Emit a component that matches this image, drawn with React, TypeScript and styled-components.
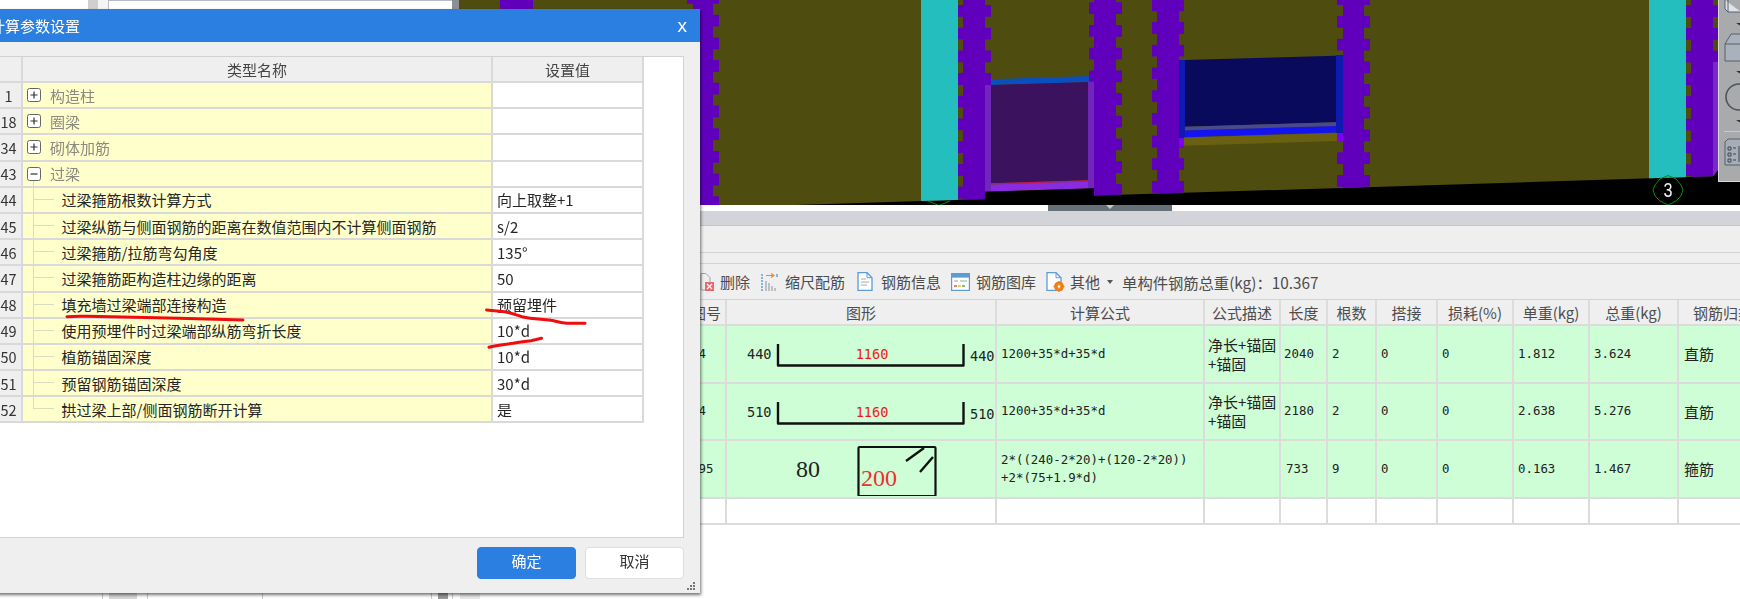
import React from "react";
import styled, { createGlobalStyle } from "styled-components";

const CJK = `"Noto Sans CJK SC", "Noto Sans", sans-serif`;
const MONO = `"DejaVu Sans Mono", "Noto Sans CJK SC", monospace`;

const Global = createGlobalStyle`
  html, body { margin: 0; padding: 0; background: #fff; overflow: hidden; }
  * { box-sizing: border-box; }
`;

const Page = styled.div`
  position: relative;
  width: 1740px;
  height: 599px;
  overflow: hidden;
  display: flex;
  flex-direction: column;
  font-family: ${CJK};
  filter: blur(0.55px);
`;

/* ---------- upper workspace ---------- */
const TopRow = styled.div`
  display: flex;
  height: 205px;
  flex: none;
`;
const TreePane = styled.div`
  width: 459px;
  flex: none;
  display: flex;
  background: #fff;
`;
const PaneBlank = styled.div`
  width: 88px;
  background: #fff;
`;
const PaneGutter = styled.div<{ $w: number; $bg: string }>`
  width: ${(p) => p.$w}px;
  background: ${(p) => p.$bg};
`;
const PaneBox = styled.div`
  flex: 1;
  background: #fff;
  border-top: 1px solid #b8bcc4;
  border-left: 1px solid #b8bcc4;
`;
const CanvasWrap = styled.div`
  position: relative;
  flex: 1;
  background: #000;
`;
const CanvasSvg = styled.svg`
  display: block;
`;
const SideTools = styled.div`
  position: absolute;
  top: 0;
  right: 0;
  width: 22px;
  height: 182px;
  background: #a9aaab;
  border-left: 1px solid #d8d8d8;
  border-bottom: 1px solid #d8d8d8;
  overflow: hidden;
`;
const Splitter = styled.div`
  height: 6px;
  flex: none;
  background: #fff;
  padding-left: 1048px;
`;
const SplitHandle = styled.div`
  width: 124px;
  height: 6px;
  background: #667078;
  display: flex;
  justify-content: center;
  &::after {
    content: "";
    border-left: 4px solid transparent;
    border-right: 4px solid transparent;
    border-top: 4px solid #c4c8cc;
  }
`;

/* ---------- lower workspace ---------- */
const LowerRow = styled.div`
  flex: 1;
  display: flex;
  min-height: 0;
`;
const LowerLeft = styled.div`
  width: 687px;
  flex: none;
  display: flex;
  align-items: flex-end;
  background: #fff;
`;
const Tick = styled.div<{ $w: number; $bg: string; $line?: boolean }>`
  width: ${(p) => p.$w}px;
  height: 8px;
  background: ${(p) => p.$bg};
  border-right: ${(p) => (p.$line ? "1px solid #c8c8c8" : "none")};
`;
const LowerRight = styled.div`
  flex: 1;
  min-width: 0;
  display: flex;
  flex-direction: column;
  background: #fff;
`;
const TabBand = styled.div`
  height: 15px;
  flex: none;
  background: #d3d4d9;
  border-bottom: 1px solid #c4c5c9;
`;
const Strip = styled.div<{ $h: number }>`
  height: ${(p) => p.$h}px;
  flex: none;
  background: #efefef;
  border-bottom: 1px solid #d2d3d6;
`;
const Toolbar = styled.div`
  height: 35px;
  flex: none;
  background: #efefef;
  display: flex;
  align-items: center;
  padding-left: 13px;
  color: #4c4c4c;
  font-size: 15px;
  white-space: nowrap;
`;
const ToolItem = styled.div<{ $gap: number; $after: number }>`
  display: flex;
  align-items: center;
  gap: ${(p) => p.$gap}px;
  margin-right: ${(p) => p.$after}px;
`;
const Caret = styled.span`
  width: 0;
  height: 0;
  border-left: 3.5px solid transparent;
  border-right: 3.5px solid transparent;
  border-top: 4px solid #555;
  margin-left: 7px;
  margin-right: 9px;
`;
const Weight = styled.span`
  font-size: 15.3px;
`;

const Grid = styled.div`
  width: 1082px;
  overflow: hidden;
  border-top: 1px solid #d4d4d4;
`;
const GRID_COLS = "40px 270px 208px 76px 47px 49px 61px 76px 76px 89px 90px";
const GridRow = styled.div<{ $h: number; $bg: string }>`
  display: grid;
  grid-template-columns: ${GRID_COLS};
  height: ${(p) => p.$h}px;
  background: ${(p) => p.$bg};
  border-bottom: 2px solid #dcdcdc;
`;
const HeadCell = styled.div`
  display: flex;
  align-items: center;
  justify-content: center;
  border-right: 2px solid #dcdcdc;
  color: #4d4d4d;
  font-size: 15px;
  white-space: nowrap;
  overflow: hidden;
`;
const DataCell = styled.div<{ $cjk?: boolean; $pad?: number }>`
  display: flex;
  align-items: center;
  padding-left: ${(p) => p.$pad ?? 4}px;
  border-right: 2px solid #dcdcdc;
  color: #222;
  font-family: ${(p) => (p.$cjk ? CJK : MONO)};
  font-size: ${(p) => (p.$cjk ? 15 : 12.4)}px;
  line-height: ${(p) => (p.$cjk ? 19 : 18)}px;
  white-space: nowrap;
  overflow: hidden;
`;
const ShapeCell = styled.div`
  border-right: 2px solid #dcdcdc;
  overflow: hidden;
`;

/* ---------- dialog ---------- */
const Dialog = styled.div`
  position: absolute;
  left: -20px;
  top: 9px;
  width: 720px;
  height: 584px;
  background: #efefef;
  box-shadow: 1px 2px 3px rgba(0, 0, 0, 0.55);
  display: flex;
  flex-direction: column;
`;
const TitleBar = styled.div`
  height: 33px;
  flex: none;
  background: #2b7fe0;
  color: #fff;
  font-size: 15px;
  display: flex;
  align-items: center;
  justify-content: space-between;
  padding: 0 13px 0 10px;
`;
const CloseX = styled.span`
  font-family: "Liberation Sans", sans-serif;
  font-size: 19px;
  line-height: 1;
`;
const TableBox = styled.div`
  height: 482px;
  margin: 14px 16px 0 2px;
  flex: none;
  background: #fff;
  border: 1px solid #d2d2d2;
  border-left: none;
`;
const DLG_COLS = "41px 470px 151px";
const DlgRow = styled.div<{ $head?: boolean }>`
  display: grid;
  grid-template-columns: ${DLG_COLS};
  width: 662px;
  height: ${(p) => (p.$head ? 26 : 26.2)}px;
  border-bottom: 2px solid #d9d9d9;
`;
const NumCell = styled.div`
  background: #efefef;
  border-right: 2px solid #d9d9d9;
  padding-left: 14px;
  display: flex;
  align-items: center;
  justify-content: center;
  color: #333;
  font-size: 14.5px;
`;
const DlgHead = styled.div`
  background: #efefef;
  border-right: 2px solid #d9d9d9;
  display: flex;
  align-items: center;
  justify-content: center;
  color: #444;
  font-size: 15px;
`;
const NameCell = styled.div<{ $group?: boolean; $line?: "full" | "last" | "start" }>`
  position: relative;
  background: #ffffcc;
  border-right: 2px solid #d9d9d9;
  display: flex;
  align-items: center;
  gap: 9px;
  padding-left: ${(p) => (p.$group ? 4 : 38.6)}px;
  color: ${(p) => (p.$group ? "#8a8a80" : "#262626")};
  font-size: 15px;
  white-space: nowrap;
  &::before {
    content: ${(p) => (p.$line ? '""' : "none")};
    position: absolute;
    left: 10px;
    width: 1px;
    background: #dcdcc0;
    top: ${(p) => (p.$line === "start" ? "19px" : "-2px")};
    bottom: ${(p) => (p.$line === "last" ? "12px" : "-2px")};
  }
  &::after {
    content: ${(p) => (p.$group ? "none" : '""')};
    position: absolute;
    left: 10px;
    top: 11px;
    width: 21px;
    height: 1px;
    background: #dcdcc0;
  }
`;
const ValueCell = styled.div`
  background: #fff;
  border-right: 2px solid #d9d9d9;
  display: flex;
  align-items: center;
  padding-left: 4px;
  color: #262626;
  font-size: 15px;
`;
const Footer = styled.div`
  flex: 1;
  display: flex;
  justify-content: flex-end;
  gap: 9px;
  padding: 9px 16px 0 0;
`;
const Btn = styled.button<{ $primary?: boolean }>`
  width: 99px;
  height: 32px;
  border-radius: 4px;
  border: 1px solid ${(p) => (p.$primary ? "#2b7fe0" : "#dedede")};
  background: ${(p) => (p.$primary ? "#2b7fe0" : "#fff")};
  color: ${(p) => (p.$primary ? "#fff" : "#333")};
  font-family: ${CJK};
  font-size: 15px;
  line-height: 20px;
  padding: 0 0 4px;
`;
const Grip = styled.svg`
  position: absolute;
  right: 4px;
  bottom: 1px;
`;
const Scribble = styled.svg`
  position: absolute;
  left: 0;
  top: 0;
  pointer-events: none;
`;

/* ---------- drawings ---------- */
const PURPLE = "#6000bd";
const OLIVE = "#4f4c10";
const CYAN = "#24bebf";

function columnPath(o0: number, c0: number, c1: number, o1: number, off: number, h = 210) {
  const period = 22.7;
  const tooth = 11.8;
  let d = `M${c0} 0H${c1}V${h}H${c0}Z`;
  for (let y = off - period; y < h; y += period) {
    d += `M${o0} ${y}H${o1}V${y + tooth}H${o0}Z`;
  }
  return d;
}

const columns: [number, number, number, number, number][] = [
  [500, 505, 528, 533, -3],
  [687, 693, 713, 719, 14.7],
  [958, 963, 985, 991, 5],
  [1089, 1094, 1116, 1122, 2.3],
  [1152, 1157, 1179, 1184, -0.6],
  [1337, 1343, 1364, 1370, -6.7],
  [1685, 1691, 1713, 1718, 5.3],
];

function BuildingCanvas() {
  return (
    <CanvasSvg width={1281} height={205} viewBox="459 0 1281 205">
      <defs>
        <clipPath id="wall">
          <polygon points="459,0 1718,0 1718,170 1713,176.3 779,205.5 459,205.5" />
        </clipPath>
      </defs>
      <rect x="459" y="0" width="1281" height="205" fill="#000" />
      <g clipPath="url(#wall)">
        <rect x="459" y="0" width="1281" height="206" fill={OLIVE} />
        {columns.map((c, i) => (
          <path key={i} d={columnPath(c[0], c[1], c[2], c[3], c[4])} fill={PURPLE} />
        ))}
        <rect x="921" y="0" width="37" height="206" fill={CYAN} />
        <rect x="1649" y="0" width="37" height="206" fill={CYAN} />
        <rect x="1713" y="62" width="5" height="120" fill="#7a28c8" />
      </g>
      {/* door-height opening */}
      <polygon points="991,79.3 1089,76 1089,82.3 991,85" fill="#0b4fbe" />
      <polygon points="985,85 991,85 991,191.6 985,191.8" fill="#7026b8" />
      <polygon points="1088,81.7 1094,81.7 1094,188.3 1088,188.5" fill="#7026b8" />
      <polygon points="991,85 1088,82 1088,180.3 991,183.3" fill="#3b125e" />
      <polygon points="991,183.3 1088,180.3 1088,181.6 991,184.6" fill="#c81850" />
      <polygon points="991,184.6 1088,181.6 1088,188.5 991,191.5" fill="#8a2be2" />
      <polygon points="985,191.8 1094,188.3 1094,196 985,200" fill="#000" />
      {/* window opening */}
      <polygon points="1179,60 1185,60 1185,138 1179,138" fill="#0f1ab0" />
      <polygon points="1336,55 1343,55 1343,133 1336,133" fill="#0f1ab0" />
      <polygon points="1185,60 1336,55.7 1336,122.3 1185,126.7" fill="#0a0a5c" />
      <polygon points="1185,126.7 1336,122.3 1336,126 1185,130.5" fill="#4a4a8a" />
      <polygon points="1185,130.5 1336,126 1336,132.5 1185,137.3" fill="#1414f0" />
      <polygon points="1184,137.5 1337,133 1337,141 1184,145.7" fill="#6a6012" />
      <rect x="1179" y="138" width="5" height="8.7" fill="#8000f0" />
      <rect x="1337" y="133" width="6" height="8.7" fill="#8000f0" />
      {/* axis markers */}
      <polyline points="928,201 939,205.5 950,201" fill="none" stroke="#0a8a14" strokeWidth="1" />
      <polygon
        points="1668,175.5 1676,179 1681,185 1683,190 1681,196 1676,201 1668,205 1660,201 1655,196 1653,190 1655,185 1660,179"
        fill="none"
        stroke="#0a8a14"
        strokeWidth="1"
      />
      <text
        x="1668"
        y="197"
        fill="#f0f0f0"
        fontFamily={`"Liberation Sans", sans-serif`}
        fontSize="20"
        textAnchor="middle"
        textLength="9"
        lengthAdjust="spacingAndGlyphs"
      >
        3
      </text>
    </CanvasSvg>
  );
}

function SideIcons() {
  return (
    <svg width="22" height="182" viewBox="0 0 22 182">
      <path d="M6 0V9L9 12H22M9 12V0" fill="#dfe4ea" stroke="#55606c" strokeWidth="1" />
      <path d="M17 23h5v3z" fill="#333" />
      <path d="M6 44L12 34H22V61H6Z" fill="#a9b1bc" stroke="#55606c" strokeWidth="1" />
      <path d="M6 44H22" stroke="#55606c" strokeWidth="1" />
      <path d="M17 71h5v3z" fill="#333" />
      <circle cx="20" cy="97" r="13" fill="none" stroke="#4d545c" strokeWidth="1.6" />
      <path d="M17 120h5v3z" fill="#333" />
      <path d="M5 131.500H22" stroke="#c8c8c8" strokeWidth="1" />
      <path d="M6 165V142L9 139H22V165Z" fill="#a6adb6" stroke="#55606c" strokeWidth="1" />
      <path
        d="M9 147h3v3H9zM9 153h3v3H9zM9 159h3v3H9zM14 148h3M14 154h3M14 160h3M20 146v16"
        fill="none"
        stroke="#3f4750"
        strokeWidth="1"
      />
    </svg>
  );
}

const IconDelete = () => (
  <svg width="14" height="18" viewBox="0 0 14 18">
    <path d="M1 0.500H6L10 4.500V12M1 0.500V17H5" fill="none" stroke="#9aa4ae" />
    <rect x="5" y="9" width="9" height="9" fill="#e9686a" />
    <path d="M7 11l5 5M12 11l-5 5" stroke="#fff" strokeWidth="1.2" />
  </svg>
);
const IconShrink = () => (
  <svg width="17" height="18" viewBox="0 0 17 18">
    <path d="M1 1v17" stroke="#5b9bd8" strokeWidth="1.4" strokeDasharray="2 1" />
    <path d="M5 2.500h7M10 0.500l3 2-3 2" fill="none" stroke="#ee8a2c" strokeWidth="1.2" />
    <path d="M16 1v3" stroke="#5b9bd8" strokeWidth="1.4" />
    <path d="M5 8v10M8 10v8M11 13v5M14 15v3" stroke="#a9adb2" strokeWidth="1.4" />
  </svg>
);
const IconDoc = () => (
  <svg width="16" height="19" viewBox="0 0 16 19">
    <path d="M1 0.700H10L15 5.700V18.300H1Z" fill="#fff" stroke="#5b9bd8" strokeWidth="1.3" />
    <path d="M10 0.700V5.700H15" fill="none" stroke="#5b9bd8" />
    <path d="M4 7h5M4 10h8M4 13h6" stroke="#a4a8ad" strokeWidth="1.1" />
  </svg>
);
const IconLibrary = () => (
  <svg width="19" height="18" viewBox="0 0 19 18">
    <rect x="0.600" y="0.600" width="17.800" height="16.800" fill="#fff" stroke="#5b9bd8" strokeWidth="1.2" />
    <rect x="0.600" y="0.600" width="17.800" height="4" fill="#5b9bd8" />
    <path d="M3 8h4M9 8h7" stroke="#9da2a8" />
    <path d="M3 13h3" stroke="#e0644c" strokeWidth="1.6" />
    <path d="M7 13h3" stroke="#e8c23c" strokeWidth="1.6" />
    <path d="M11 13h3" stroke="#60b060" strokeWidth="1.6" />
  </svg>
);
const IconOther = () => (
  <svg width="19" height="20" viewBox="0 0 19 20">
    <path d="M1 0.700H10L15 5.700V18.300H1Z" fill="#fff" stroke="#5b9bd8" strokeWidth="1.3" />
    <path d="M10 0.700V5.700H15" fill="none" stroke="#5b9bd8" />
    <circle cx="13" cy="14.500" r="3.600" fill="none" stroke="#f07f14" strokeWidth="2.600" />
    <path d="M13 9v11M7.500 14.500h11M9.500 11l7 7M16.500 11l-7 7" stroke="#f07f14" strokeWidth="1.300" />
    <circle cx="13" cy="14.500" r="1.300" fill="#fff" />
  </svg>
);

const NUM = `"DejaVu Sans Mono", monospace`;
function Bracket({ left, right }: { left: string; right: string }) {
  return (
    <svg width="268" height="55" viewBox="0 0 268 55">
      <text x="20" y="33" fontFamily={NUM} fontSize="13.600" fill="#222">{left}</text>
      <path d="M51 18V39.500H236.500V18" fill="none" stroke="#111" strokeWidth="2.400" strokeLinejoin="round" />
      <text x="145" y="33" fontFamily={NUM} fontSize="13.600" fill="#f01818" textAnchor="middle">1160</text>
      <text x="243" y="35" fontFamily={NUM} fontSize="13.600" fill="#222">{right}</text>
    </svg>
  );
}
function Stirrup() {
  return (
    <svg width="268" height="55" viewBox="0 0 268 55">
      <text x="69" y="36" fontFamily={`"Liberation Serif", serif`} fontSize="24" fill="#222">80</text>
      <rect x="131.500" y="6" width="77" height="49" rx="1" fill="none" stroke="#111" strokeWidth="2.200" />
      <text x="134" y="45" fontFamily={`"Liberation Serif", serif`} fontSize="24" fill="#f03030">200</text>
      <path d="M179 20L197 7M193 31L206 16" stroke="#111" strokeWidth="2.400" />
    </svg>
  );
}

/* ---------- data ---------- */
type DlgItem = { n: number; name: string; value?: string; group?: "plus" | "minus"; line?: "full" | "last" | "start" };
const dlgRows: DlgItem[] = [
  { n: 1, name: "构造柱", group: "plus" },
  { n: 18, name: "圈梁", group: "plus" },
  { n: 34, name: "砌体加筋", group: "plus" },
  { n: 43, name: "过梁", group: "minus", line: "start" },
  { n: 44, name: "过梁箍筋根数计算方式", value: "向上取整+1", line: "full" },
  { n: 45, name: "过梁纵筋与侧面钢筋的距离在数值范围内不计算侧面钢筋", value: "s/2", line: "full" },
  { n: 46, name: "过梁箍筋/拉筋弯勾角度", value: "135°", line: "full" },
  { n: 47, name: "过梁箍筋距构造柱边缘的距离", value: "50", line: "full" },
  { n: 48, name: "填充墙过梁端部连接构造", value: "预留埋件", line: "full" },
  { n: 49, name: "使用预埋件时过梁端部纵筋弯折长度", value: "10*d", line: "full" },
  { n: 50, name: "植筋锚固深度", value: "10*d", line: "full" },
  { n: 51, name: "预留钢筋锚固深度", value: "30*d", line: "full" },
  { n: 52, name: "拱过梁上部/侧面钢筋断开计算", value: "是", line: "last" },
];

const headers = ["图号", "图形", "计算公式", "公式描述", "长度", "根数", "搭接", "损耗(%)", "单重(kg)", "总重(kg)", "钢筋归类"];

type Rebar = {
  no: string;
  shape: React.ReactNode;
  formula: React.ReactNode;
  desc: React.ReactNode;
  len: string;
  count: string;
  unit: string;
  total: string;
  kind: string;
};
const descTwoLines = (
  <span>
    净长+锚固
    <br />
    +锚固
  </span>
);
const rebars: Rebar[] = [
  { no: "14", shape: <Bracket left="440" right="440" />, formula: "1200+35*d+35*d", desc: descTwoLines, len: "2040", count: "2", unit: "1.812", total: "3.624", kind: "直筋" },
  { no: "14", shape: <Bracket left="510" right="510" />, formula: "1200+35*d+35*d", desc: descTwoLines, len: "2180", count: "2", unit: "2.638", total: "5.276", kind: "直筋" },
  {
    no: "195",
    shape: <Stirrup />,
    formula: (
      <span>
        2*((240-2*20)+(120-2*20))
        <br />
        +2*(75+1.9*d)
      </span>
    ),
    desc: "",
    len: "733",
    count: "9",
    unit: "0.163",
    total: "1.467",
    kind: "箍筋",
  },
];

const TreeBox = ({ kind }: { kind: "plus" | "minus" }) => (
  <svg width="14" height="14" viewBox="0 0 14 14" style={{ flex: "none" }}>
    <rect x="0.500" y="0.500" width="13" height="13" rx="2" fill="#fff" stroke="#666" />
    <path d={kind === "plus" ? "M3.500 7h7M7 3.500v7" : "M3.500 7h7"} stroke="#333" strokeWidth="1.200" />
  </svg>
);

export default function App() {
  return (
    <Page>
      <Global />
      <TopRow>
        <TreePane>
          <PaneBlank />
          <PaneGutter $w={10} $bg="#cfcfcf" />
          <PaneGutter $w={10} $bg="#f4f4f4" />
          <PaneBox />
          <PaneGutter $w={7} $bg="#8c8f94" />
        </TreePane>
        <CanvasWrap>
          <BuildingCanvas />
          <SideTools>
            <SideIcons />
          </SideTools>
        </CanvasWrap>
      </TopRow>
      <Splitter>
        <SplitHandle />
      </Splitter>
      <LowerRow>
        <LowerLeft>
          <Tick $w={103} $bg="#fff" $line />
          <Tick $w={6} $bg="#fff" />
          <Tick $w={28} $bg="#d8d8d8" />
          <Tick $w={11} $bg="#fff" $line />
          <Tick $w={115} $bg="#fff" $line />
          <Tick $w={169} $bg="#fff" $line />
          <Tick $w={6} $bg="#fff" />
          <Tick $w={10} $bg="#9a9a9a" />
          <Tick $w={5} $bg="#fff" $line />
          <Tick $w={7} $bg="#fff" />
          <Tick $w={20} $bg="#e8e8e8" />
        </LowerLeft>
        <LowerRight>
          <TabBand />
          <Strip $h={27} />
          <Strip $h={11} />
          <Toolbar>
            <ToolItem $gap={6} $after={11}><IconDelete />删除</ToolItem>
            <ToolItem $gap={7} $after={12}><IconShrink />缩尺配筋</ToolItem>
            <ToolItem $gap={8} $after={10}><IconDoc />钢筋信息</ToolItem>
            <ToolItem $gap={6} $after={10}><IconLibrary />钢筋图库</ToolItem>
            <ToolItem $gap={5} $after={0}><IconOther />其他</ToolItem>
            <Caret />
            <Weight>单构件钢筋总重(kg)：10.367</Weight>
          </Toolbar>
          <Grid>
            <GridRow $h={26} $bg="#efefef">
              {headers.map((h) => (
                <HeadCell key={h}>{h}</HeadCell>
              ))}
            </GridRow>
            {rebars.map((r, i) => (
              <GridRow key={i} $h={57.5} $bg="#cdfed6">
                <DataCell $pad={4}>{r.no}</DataCell>
                <ShapeCell>{r.shape}</ShapeCell>
                <DataCell>{r.formula}</DataCell>
                <DataCell $cjk $pad={3}>{r.desc}</DataCell>
                <DataCell $pad={i === 2 ? 5 : 3}>{r.len}</DataCell>
                <DataCell>{r.count}</DataCell>
                <DataCell>{"0"}</DataCell>
                <DataCell>{"0"}</DataCell>
                <DataCell>{r.unit}</DataCell>
                <DataCell>{r.total}</DataCell>
                <DataCell $cjk $pad={5}>{r.kind}</DataCell>
              </GridRow>
            ))}
            <GridRow $h={26} $bg="#fff">
              {headers.map((h) => (
                <DataCell key={h} />
              ))}
            </GridRow>
          </Grid>
        </LowerRight>
      </LowerRow>

      <Dialog>
        <TitleBar>
          <span>计算参数设置</span>
          <CloseX>x</CloseX>
        </TitleBar>
        <TableBox>
          <DlgRow $head>
            <NumCell />
            <DlgHead>类型名称</DlgHead>
            <DlgHead>设置值</DlgHead>
          </DlgRow>
          {dlgRows.map((r) => (
            <DlgRow key={r.n}>
              <NumCell>{r.n}</NumCell>
              <NameCell $group={!!r.group} $line={r.line}>
                {r.group && <TreeBox kind={r.group} />}
                {r.name}
              </NameCell>
              <ValueCell>{r.value}</ValueCell>
            </DlgRow>
          ))}
        </TableBox>
        <Footer>
          <Btn $primary>确定</Btn>
          <Btn>取消</Btn>
        </Footer>
        <Grip width="10" height="10" viewBox="0 0 10 10">
          <path d="M7 0h2v2H7zM4 3h2v2H4zM7 3h2v2H7zM1 6h2v2H1zM4 6h2v2H4zM7 6h2v2H7z" fill="#777" />
        </Grip>
      </Dialog>

      <Scribble width="700" height="599" viewBox="0 0 700 599">
        <g fill="none" stroke="#f00c0c" strokeWidth="3" strokeLinecap="round" strokeLinejoin="round">
          <path d="M67 316.700C75 316 80 316 87 316.300L134 317.300L178.600 318.300L243 320" />
          <path d="M486.600 310L504.500 311.700C512 313 516 315 522 316.700C532 319 540 319 549 320C556 321 560 323 567 323.300H585" />
          <path d="M489 347.300C497 345 505 344.500 513 343.300C520 342 525 341.500 531 340.700L541.500 338.300" />
        </g>
      </Scribble>
    </Page>
  );
}
